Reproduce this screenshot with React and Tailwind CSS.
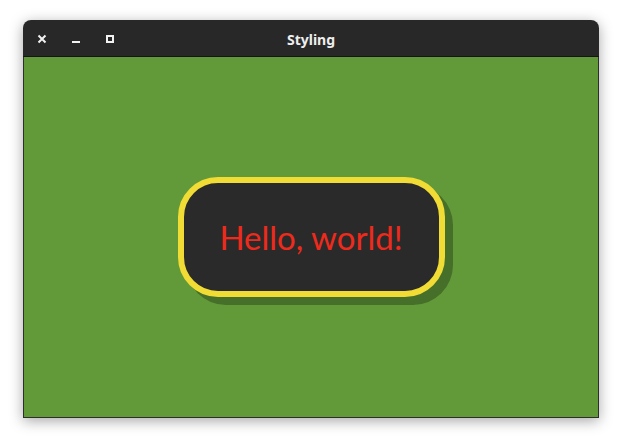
export default function App() {
  return (
    <div className="w-[622px] h-[444px] bg-white pt-[20px] pl-[23px] font-['Noto_Sans',sans-serif]">
      <div className="w-[576px] h-[398px] flex flex-col rounded-t-[8px] shadow-[0_3px_14px_rgba(0,0,0,0.35)]">
        <div className="h-[37px] shrink-0 relative flex items-center bg-[#282828] rounded-t-[8px] border-b border-[#151515]">
          <div className="flex items-center gap-[24px] pl-[14px] pt-[2px]">
            <svg width="10" height="10" viewBox="0 0 10 10">
              <path d="M1.5 1.5 L8.5 8.5 M8.5 1.5 L1.5 8.5" stroke="#f2f2f2" strokeWidth="2" />
            </svg>
            <svg width="10" height="10" viewBox="0 0 10 10">
              <path d="M1 8 H9" stroke="#f2f2f2" strokeWidth="2" />
            </svg>
            <svg width="10" height="10" viewBox="0 0 10 10">
              <rect x="2" y="2" width="6" height="6" fill="none" stroke="#f2f2f2" strokeWidth="2" />
            </svg>
          </div>
          <span className="absolute inset-x-0 text-center text-[14px] font-bold text-[#eeeeee] pt-[2px]">
            Styling
          </span>
        </div>
        <div className="flex-1 flex items-center justify-center bg-[#629a3a] border border-t-0 border-[#2e2e2e]">
          <button className="w-[267px] h-[120px] flex items-center justify-center rounded-[40px] border-[6px] border-[#f0dc34] bg-[#2a2a2a] shadow-[8px_8px_0_#466f29] font-['Lato',sans-serif] text-[33px] text-[#ee2a1c] pt-[1px]">
            Hello, world!
          </button>
        </div>
      </div>
    </div>
  );
}
